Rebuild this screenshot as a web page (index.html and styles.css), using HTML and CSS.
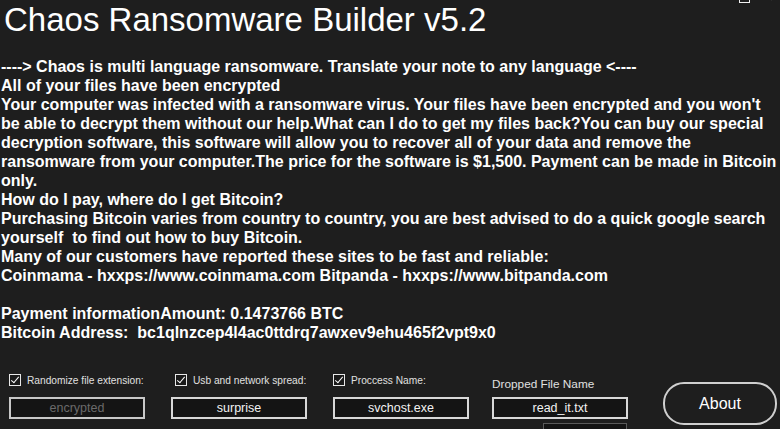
FILE: index.html
```html
<!DOCTYPE html>
<html lang="en">
<head>
    <meta charset="UTF-8">
    <title>Chaos Ransomware Builder v5.2</title>
    <link rel="stylesheet" href="styles.css">
</head>
<body>
    <div class="window">
        <div class="caption-buttons">
            <span class="btn-max"></span>
            <span class="btn-close"></span>
        </div>

        <h1 class="title">Chaos Ransomware Builder v5.2</h1>

        <!-- texto de la nota, con los saltos de linea del cuadro original -->
        <div class="note">
            ----&gt; Chaos is multi language ransomware. Translate your note to any language &lt;----<br>
            All of your files have been encrypted<br>
            Your computer was infected with a ransomware virus. Your files have been encrypted and you won't<br>
            be able to decrypt them without our help.What can I do to get my files back?You can buy our special<br>
            decryption software, this software will allow you to recover all of your data and remove the<br>
            ransomware from your computer.The price for the software is $1,500. Payment can be made in Bitcoin<br>
            only.<br>
            How do I pay, where do I get Bitcoin?<br>
            Purchasing Bitcoin varies from country to country, you are best advised to do a quick google search<br>
            yourself&nbsp; to find out how to buy Bitcoin.<br>
            Many of our customers have reported these sites to be fast and reliable:<br>
            Coinmama - hxxps://www.coinmama.com Bitpanda - hxxps://www.bitpanda.com<br>
            &nbsp;<br>
            Payment informationAmount: 0.1473766 BTC<br>
            Bitcoin Address:&nbsp; bc1qlnzcep4l4ac0ttdrq7awxev9ehu465f2vpt9x0
        </div>

        <div class="options">
            <div class="option opt-ext">
                <label class="check"><span class="box"></span>Randomize file extension:</label>
                <div class="field dim">encrypted</div>
            </div>
            <div class="option opt-spread">
                <label class="check"><span class="box"></span>Usb and network spread:</label>
                <div class="field">surprise</div>
            </div>
            <div class="option opt-proc">
                <label class="check"><span class="box"></span>Proccess Name:</label>
                <div class="field">svchost.exe</div>
            </div>
            <div class="option opt-drop">
                <label class="plain">Dropped File Name</label>
                <div class="field">read_it.txt</div>
                <div class="field small"></div>
            </div>
            <button class="about">About</button>
        </div>
    </div>
</body>
</html>
```

FILE: styles.css
```css
body {
    margin: 0;
    background-color: #1e1e1e;
    font-family: 'Liberation Sans', Arial, sans-serif;
    color: #ffffff;
    overflow: hidden;
}

.window {
    position: relative;
    width: 780px;
    height: 429px;
    overflow: hidden;
}

/* botones de la barra de titulo (cortados arriba) */
.caption-buttons {
    position: absolute;
    top: 0;
    right: 0;
    width: 60px;
    height: 6px;
}

.btn-max {
    position: absolute;
    left: 19px;
    top: -6px;
    width: 9px;
    height: 7px;
    border: 1.5px solid #f0f0f0;
}

.btn-close {
    position: absolute;
    right: 2px;
    top: -3px;
    width: 5px;
    height: 5px;
    border-left: 2px solid #f0f0f0;
    transform: rotate(45deg);
}

.title {
    margin: 0;
    padding: 1px 0 0 4px;
    height: 56px;
    font-size: 33px;
    font-weight: normal;
    line-height: 38px;
}

.note {
    padding-left: 1px;
    font-size: 16px;
    font-weight: bold;
    line-height: 19px;
    white-space: nowrap;
}

.options {
    display: flex;
    align-items: flex-start;
    margin-top: 32px;
    padding-left: 9px;
}

.option {
    display: flex;
    flex-direction: column;
    width: 136px;
}

.opt-ext { margin-right: 26px; }
.opt-spread { margin-right: 26px; }
.opt-proc { margin-right: 23px; }
.opt-drop { margin-right: 35px; }

.check, .plain {
    display: flex;
    align-items: center;
    height: 12px;
    font-size: 10.2px;
    color: #e0e0e0;
    white-space: nowrap;
    margin-bottom: 11px;
}

.plain {
    margin-top: 4px;
    margin-bottom: 7px;
    font-size: 11.8px;
}

.check .box {
    position: relative;
    width: 10px;
    height: 10px;
    border: 1px solid #e8e8e8;
    background-color: #1a1a1a;
    margin-right: 6px;
    flex-shrink: 0;
}

.check .box::after {
    content: '';
    position: absolute;
    left: 3px;
    top: 0px;
    width: 3px;
    height: 7px;
    border-right: 1.5px solid #ffffff;
    border-bottom: 1.5px solid #ffffff;
    transform: rotate(40deg);
}

.opt-spread .check .box { margin-left: 4px; }

.field {
    height: 18px;
    border: 2px solid #d8d8d8;
    background-color: #141414;
    font-size: 12.5px;
    line-height: 18px;
    text-align: center;
    color: #f2f2f2;
}

.field.dim {
    color: #6a6a6a;
    border-color: #c8c8c8;
}

.field.small {
    width: 82px;
    margin-left: 51px;
    margin-top: 4px;
    border: 1px solid #5a5a5a;
}

.about {
    width: 114px;
    height: 43px;
    margin-top: 8px;
    border: 2px solid #cfcfcf;
    border-radius: 21px;
    background-color: #1e1e1e;
    color: #ffffff;
    font-family: 'Liberation Sans', Arial, sans-serif;
    font-size: 16px;
    cursor: pointer;
}
```
